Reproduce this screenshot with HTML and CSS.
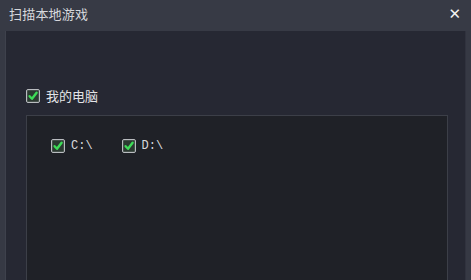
FILE: index.html
```html
<!DOCTYPE html>
<html>
<head>
<meta charset="utf-8">
<link rel="stylesheet" href="styles.css">
</head>
<body>
<div class="window">
  <div class="titlebar">
    <span class="title">扫描本地游戏</span>
    <span class="close">✕</span>
  </div>
  <div class="frame">
    <div class="content">
      <label class="check-row">
        <span class="box"><svg viewBox="0 0 12 12" width="12" height="12"><path d="M2.6 6.2 L5 8.8 L9.6 2.8" fill="none" stroke="#3ddc57" stroke-width="2.4" stroke-linecap="round" stroke-linejoin="round"/></svg></span>
        <span class="label">我的电脑</span>
      </label>
      <div class="panel">
        <div class="drives">
          <label class="drive">
            <span class="box"><svg viewBox="0 0 12 12" width="12" height="12"><path d="M2.6 6.2 L5 8.8 L9.6 2.8" fill="none" stroke="#3ddc57" stroke-width="2.4" stroke-linecap="round" stroke-linejoin="round"/></svg></span>
            <span class="mono">C:\</span>
          </label>
          <label class="drive">
            <span class="box"><svg viewBox="0 0 12 12" width="12" height="12"><path d="M2.6 6.2 L5 8.8 L9.6 2.8" fill="none" stroke="#3ddc57" stroke-width="2.4" stroke-linecap="round" stroke-linejoin="round"/></svg></span>
            <span class="mono">D:\</span>
          </label>
        </div>
      </div>
    </div>
  </div>
</div>
</body>
</html>
```
FILE: styles.css
```css
html, body {
  margin: 0;
  padding: 0;
  width: 471px;
  height: 280px;
  overflow: hidden;
  background: #373a45;
}
.window {
  display: flex;
  flex-direction: column;
  height: 280px;
  font-family: "Noto Sans CJK SC", "Noto Sans", sans-serif;
}
.titlebar {
  height: 31px;
  flex: none;
  display: flex;
  align-items: center;
  justify-content: space-between;
  padding: 0 10px 4px 9px;
  box-sizing: border-box;
  background: #373a45;
}
.title {
  color: #d6d8dc;
  font-size: 13px;
  letter-spacing: 0.2px;
}
.close {
  color: #f2f2f2;
  font-size: 15px;
  font-weight: bold;
  font-family: "DejaVu Sans", sans-serif;
}
.frame {
  flex: 1;
  display: flex;
  padding: 0 5px 0 5px;
  background: #363944;
}
.content {
  flex: 1;
  display: flex;
  flex-direction: column;
  background: #262833;
  border-left: 1px solid #3e414c;
  border-right: 1px solid #30323e;
  padding: 57px 17px 0 20px;
}
.check-row {
  display: flex;
  align-items: center;
  gap: 6px;
  height: 15px;
}
.box {
  width: 12px;
  height: 12px;
  border: 1px solid #b9bcc0;
  border-radius: 2px;
  background: #2b3a31;
  display: flex;
  align-items: center;
  justify-content: center;
  box-shadow: inset 0 0 0 1px #44504a;
}
.box svg {
  width: 12px;
  height: 12px;
}
.label {
  color: #e2e3e6;
  font-size: 13px;
}
.panel {
  flex: 1;
  margin-top: 12px;
  background: #1f2127;
  border: 1px solid #3c3f48;
  border-bottom: none;
  padding: 23px 0 0 24px;
}
.drives {
  display: flex;
  gap: 29px;
}
.drive {
  display: flex;
  align-items: center;
  gap: 6px;
}
.mono {
  font-family: "Liberation Mono", monospace;
  font-size: 12px;
  color: #d8d9dc;
}
```
